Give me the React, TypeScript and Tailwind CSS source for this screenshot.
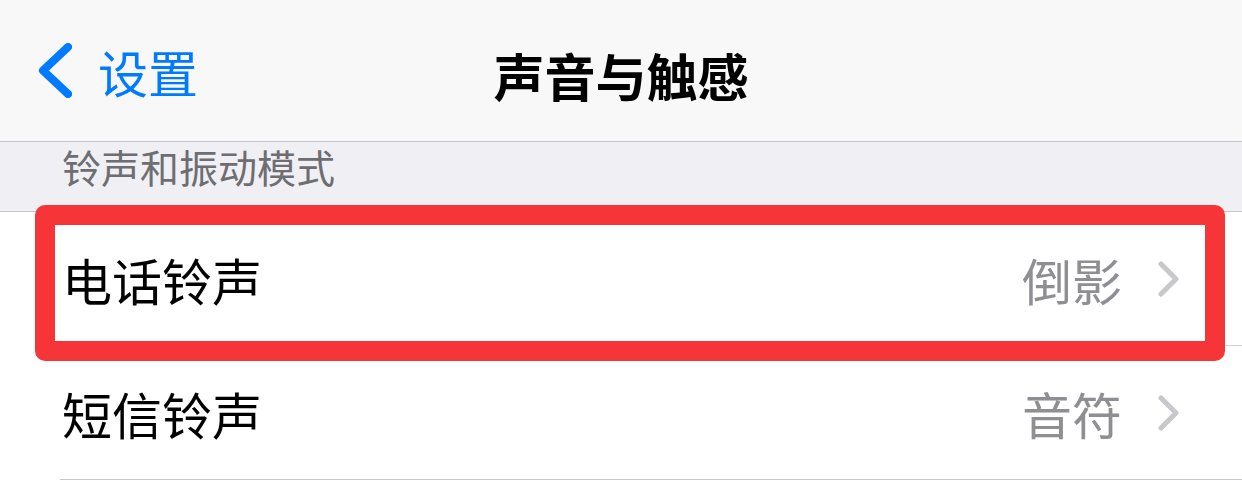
const font = { fontFamily: '"Noto Sans CJK SC", "Noto Sans", sans-serif' };

function Chevron({ className }: { className?: string }) {
  return (
    <svg viewBox="0 0 21 36" className={className} fill="none">
      <path d="M3 3 L18 18 L3 33" stroke="currentColor" strokeWidth="5" strokeLinecap="round" strokeLinejoin="round" />
    </svg>
  );
}

function Row({ label, value, last }: { label: string; value: string; last?: boolean }) {
  return (
    <div className="flex h-[134px] flex-col">
      <div className="flex flex-1 items-center justify-between pl-[62px] pr-[63px]">
        <span className="text-[50px] leading-none text-black">{label}</span>
        <div className="flex items-center gap-[36px]">
          <span className="text-[50px] leading-none text-[#8e8e93]">{value}</span>
          <Chevron className="h-[36px] w-[21px] text-[#c7c7cc]" />
        </div>
      </div>
      <div className={`ml-[60px] h-px ${last ? 'bg-[#c8c7cc]' : 'bg-[#d1d1d6]'}`} />
    </div>
  );
}

export default function App() {
  return (
    <div className="relative h-[501px] w-[1242px] overflow-hidden bg-white" style={font}>
      <div className="flex h-[141px] items-center bg-[#f8f8f9] px-[38px]">
        <div className="flex flex-1 items-center gap-[26px] text-[#007aff]">
          <svg viewBox="0 0 34 55" className="h-[55px] w-[34px]" fill="none">
            <path d="M30 4 L5 27.5 L30 51" stroke="currentColor" strokeWidth="8" strokeLinecap="round" strokeLinejoin="round" />
          </svg>
          <span className="text-[50px] leading-none">设置</span>
        </div>
        <span className="absolute left-1/2 top-[50px] -translate-x-1/2 text-[51px] font-semibold leading-none text-black">
          声音与触感
        </span>
      </div>
      <div className="h-px bg-[#c6c6c9]" />
      <div className="h-[69px] bg-[#efeff4] pl-[62px] pt-[5px]">
        <span className="text-[39px] leading-none text-[#6d6d72]">铃声和振动模式</span>
      </div>
      <div className="h-px bg-[#c8c7cc]" />
      <Row label="电话铃声" value="倒影" />
      <Row label="短信铃声" value="音符" last />
      <div className="absolute left-[35px] top-[205px] h-[156px] w-[1190px] rounded-[10px] border-[20px] border-[#f63538]" />
    </div>
  );
}
